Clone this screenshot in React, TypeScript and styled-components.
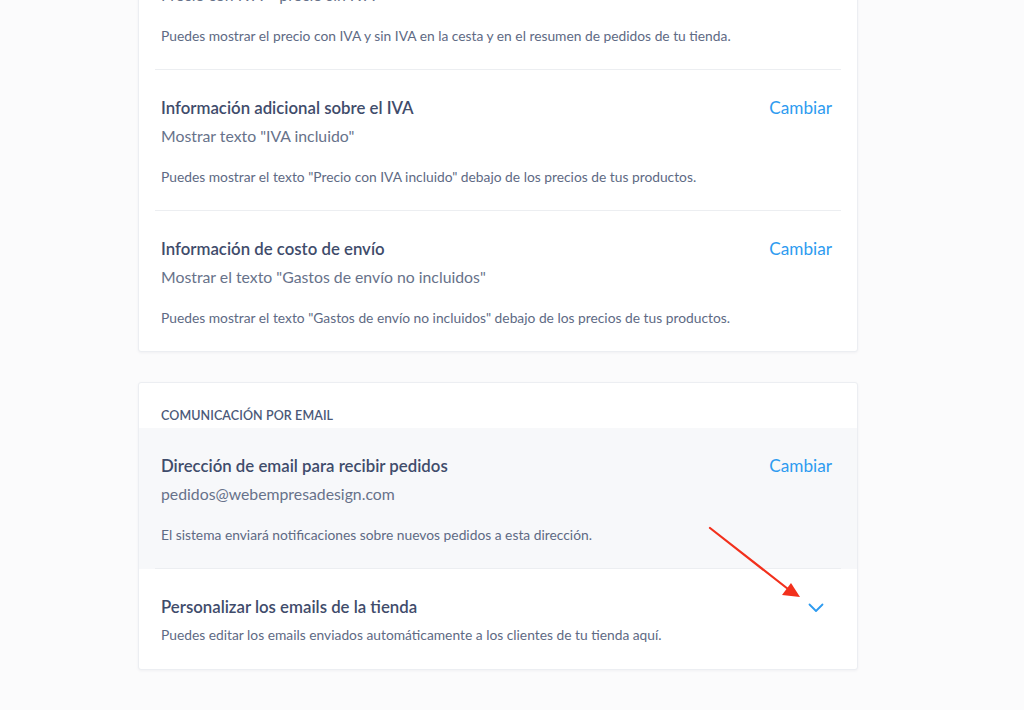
import React from "react";
import styled, { createGlobalStyle } from "styled-components";

const Global = createGlobalStyle`
  html, body { margin: 0; padding: 0; background: #fbfbfc; }
  body { font-family: Lato, "Open Sans", sans-serif; -webkit-font-smoothing: antialiased; overflow: hidden; }
`;

const Page = styled.div`
  position: relative;
  width: 1024px;
  height: 710px;
  overflow: hidden;
`;

const Column = styled.div`
  width: 720px;
  margin: -72px auto 0 138px;
  display: flex;
  flex-direction: column;
  gap: 30px;
`;

const Card = styled.section`
  background: #ffffff;
  border: 1px solid #eceef2;
  border-radius: 3px;
  box-shadow: 0 1px 3px rgba(30, 45, 80, 0.05);
`;

const CardHeader = styled.div`
  padding: 25px 22px 4px;
  font-size: 12.5px;
  line-height: 16px;
  font-weight: 600;
  letter-spacing: 0.1px;
  color: #4a5878;
  text-transform: uppercase;
`;

const Shade = styled.div<{ $grey?: boolean }>`
  background: ${(p) => (p.$grey ? "#f7f8fa" : "transparent")};
`;

const Row = styled.div<{ $last?: boolean; $bottom?: number }>`
  margin: 0 16px;
  padding: 28px 9px ${(p) => p.$bottom ?? 24}px 6px;
  border-bottom: ${(p) => (p.$last ? "none" : "1px solid #eceef1")};
  display: grid;
  grid-template-columns: 1fr auto;
  column-gap: 16px;
`;

const Title = styled.div`
  font-size: 16.8px;
  line-height: 20px;
  font-weight: 600;
  color: #3f4c6b;
`;

const Value = styled.div`
  grid-column: 1;
  margin-top: 8px;
  font-size: 15.8px;
  line-height: 20px;
  color: #67728a;
`;

const Desc = styled.div<{ $gap?: number }>`
  grid-column: 1;
  margin-top: ${(p) => p.$gap ?? 22}px;
  font-size: 13.8px;
  line-height: 18px;
  color: #5e6a84;
`;

const Action = styled.a`
  grid-column: 2;
  grid-row: 1;
  font-size: 17.2px;
  line-height: 20px;
  color: #2d9bf0;
  text-decoration: none;
  cursor: pointer;
`;

const Chevron = styled.div`
  grid-column: 2;
  grid-row: 1;
  display: flex;
  align-items: center;
  justify-content: center;
  padding-right: 8px;
  padding-top: 2px;
  color: #2d9bf0;
`;

const Arrow = styled.svg`
  position: absolute;
  left: 700px;
  top: 520px;
  pointer-events: none;
`;

type Item = { title: string; value: string; desc: string };

const SettingRow: React.FC<Item & { last?: boolean }> = ({ title, value, desc, last }) => (
  <Row $last={last}>
    <Title>{title}</Title>
    <Action>Cambiar</Action>
    <Value>{value}</Value>
    <Desc>{desc}</Desc>
  </Row>
);

export default function App() {
  return (
    <Page>
      <Global />
      <Column>
        <Card>
          <SettingRow
            title="Precio con IVA y sin IVA"
            value={'Precio con IVA + precio sin IVA'}
            desc="Puedes mostrar el precio con IVA y sin IVA en la cesta y en el resumen de pedidos de tu tienda."
          />
          <SettingRow
            title="Información adicional sobre el IVA"
            value={'Mostrar texto "IVA incluido"'}
            desc={'Puedes mostrar el texto "Precio con IVA incluido" debajo de los precios de tus productos.'}
          />
          <SettingRow
            last
            title="Información de costo de envío"
            value={'Mostrar el texto "Gastos de envío no incluidos"'}
            desc={'Puedes mostrar el texto "Gastos de envío no incluidos" debajo de los precios de tus productos.'}
          />
        </Card>
        <Card>
          <CardHeader>Comunicación por email</CardHeader>
          <Shade $grey>
            <SettingRow
              title="Dirección de email para recibir pedidos"
              value="pedidos@webempresadesign.com"
              desc="El sistema enviará notificaciones sobre nuevos pedidos a esta dirección."
            />
          </Shade>
          <Row $last $bottom={25}>
            <Title>Personalizar los emails de la tienda</Title>
            <Chevron>
              <svg width="16" height="10" viewBox="0 0 16 10" fill="none">
                <path d="M1.5 1.5 L8 8 L14.5 1.5" stroke="currentColor" strokeWidth="1.8" strokeLinecap="round" strokeLinejoin="round" />
              </svg>
            </Chevron>
            <Desc $gap={9}>Puedes editar los emails enviados automáticamente a los clientes de tu tienda aquí.</Desc>
          </Row>
        </Card>
      </Column>
      <Arrow width="110" height="90" viewBox="0 0 110 90">
        <line x1="10" y1="8" x2="88" y2="69" stroke="#f2301c" strokeWidth="2.2" strokeLinecap="round" />
        <polygon points="100,77 82,75 91,63" fill="#f2301c" />
      </Arrow>
    </Page>
  );
}
